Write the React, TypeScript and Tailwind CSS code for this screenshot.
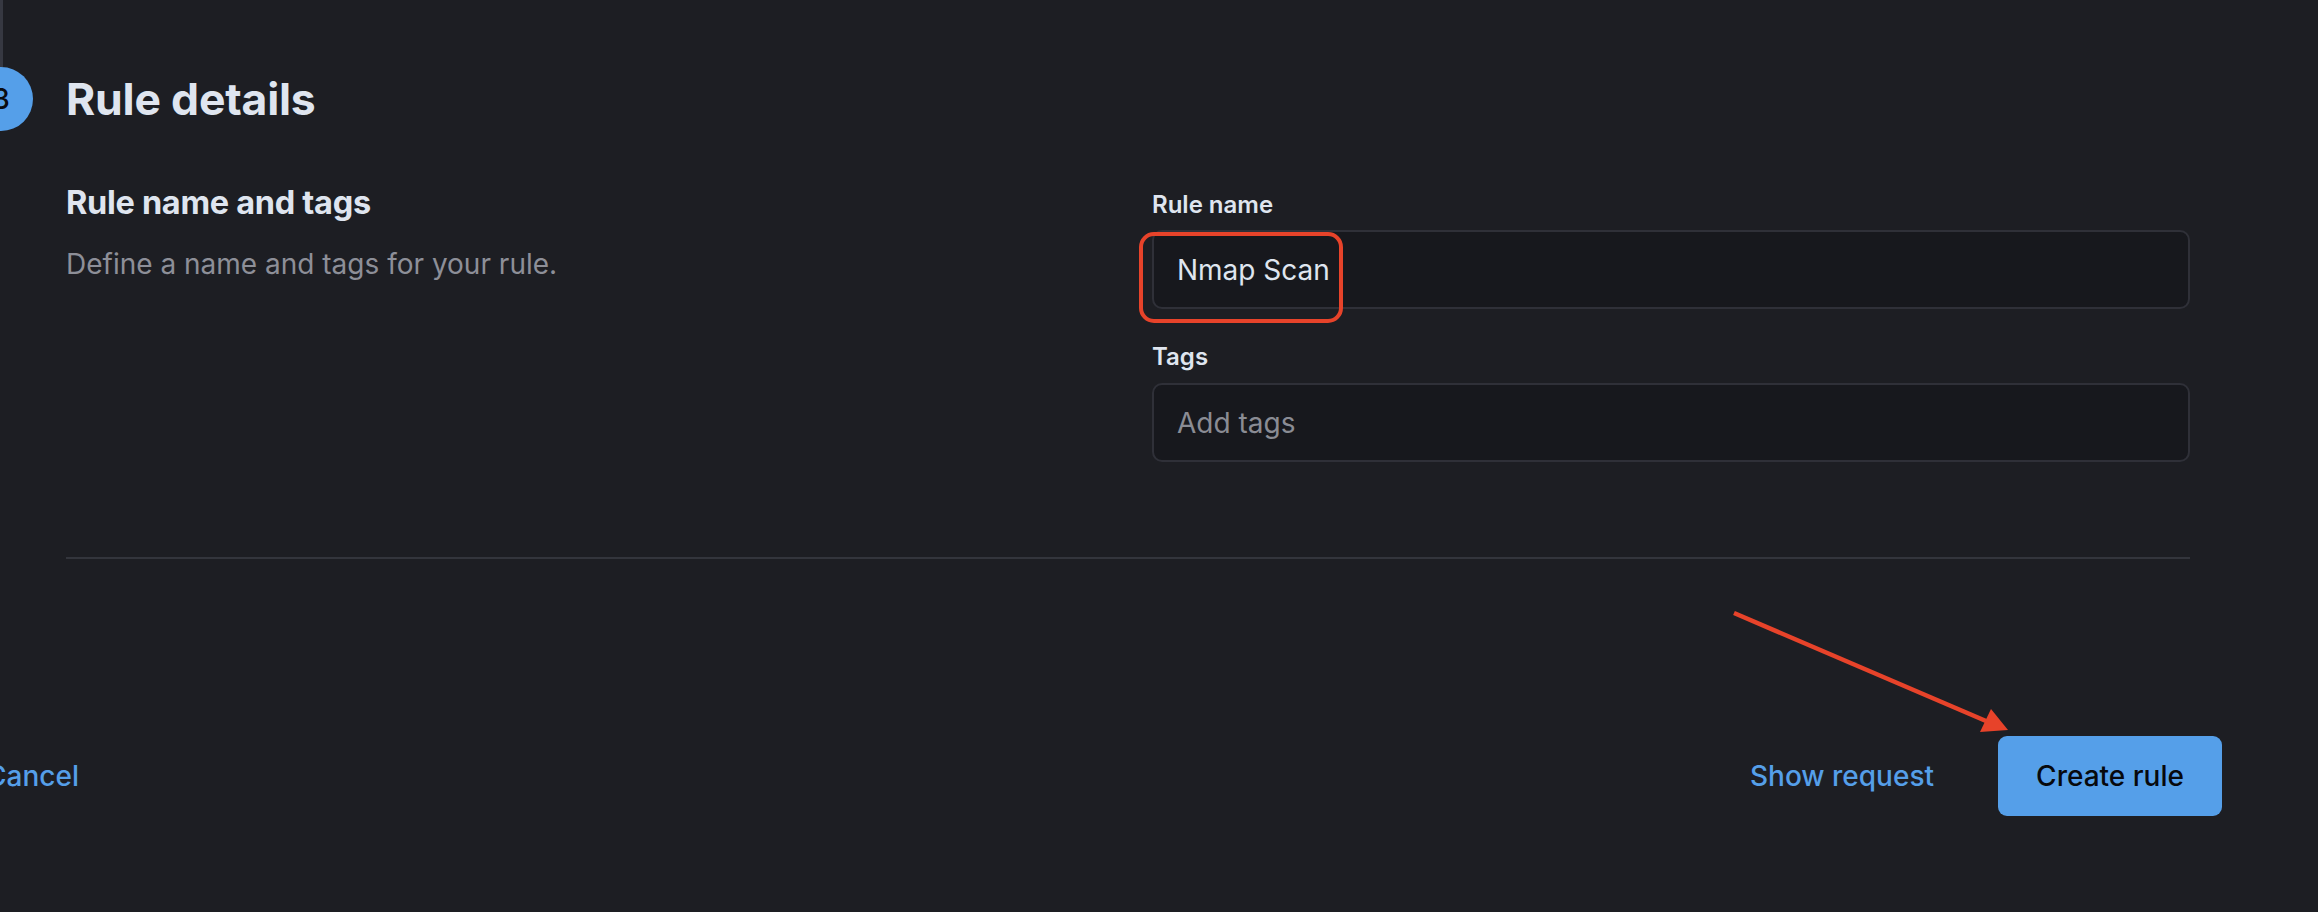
import React from "react";

export default function App() {
  return (
    <div
      className="relative w-[2318px] h-[912px] overflow-hidden bg-[#1d1e23] text-[#dfe5ef]"
      style={{ fontFamily: "Inter, 'Noto Sans', sans-serif" }}
    >
      {/* step */}
      <div className="flex">
        <div className="-ml-[31px] w-[64px] shrink-0 flex flex-col items-center">
          <div className="w-[3px] h-[67px] bg-[#363841]" />
          <div className="w-[64px] h-[64px] rounded-full bg-[#559fe9] flex items-center justify-center text-[28px] font-medium text-[#0b0c10] leading-none">
            3
          </div>
        </div>
        <div className="ml-[33px] flex-1 mr-[128px] pt-[67px]">
          <div className="h-[64px] flex items-center">
            <h2 className="text-[44.5px] font-bold leading-none tracking-[-0.2px] text-[#dfe5ef]">
              Rule details
            </h2>
          </div>

          <div className="mt-[56px] flex">
            <div className="flex-1">
              <h3 className="text-[32.5px] font-bold leading-none tracking-[-0.3px] text-[#dfe5ef]">
                Rule name and tags
              </h3>
              <p className="mt-[30px] text-[28px] leading-none text-[#8d8f98]">
                Define a name and tags for your rule.
              </p>
            </div>
            <div className="w-[1038px] shrink-0 pt-[6px]">
              <div className="text-[24px] font-semibold leading-none text-[#dfe5ef]">
                Rule name
              </div>
              <div className="mt-[13px] h-[79px] rounded-[10px] border-2 border-[#2f3038] bg-[#17181d] flex items-center pl-[23px] text-[28px] text-[#dfe5ef]">
                Nmap Scan
              </div>
              <div className="mt-[36px] text-[24px] font-semibold leading-none text-[#dfe5ef]">
                Tags
              </div>
              <div className="mt-[14px] h-[79px] rounded-[10px] border-2 border-[#2f3038] bg-[#17181d] flex items-center pl-[23px] text-[28px] text-[#8a8c94]">
                Add tags
              </div>
            </div>
          </div>

          <div className="mt-[95px] h-[2px] bg-[#33353c]" />
        </div>
      </div>

      {/* footer */}
      <div className="mt-[177px] -ml-[14px] mr-[96px] flex items-center justify-between">
        <button className="text-[28px] font-medium text-[#559fe9] leading-none">Cancel</button>
        <div className="flex items-center gap-[64px]">
          <button className="text-[28px] font-medium text-[#559fe9] leading-none">Show request</button>
          <button className="w-[224px] h-[80px] rounded-[9px] bg-[#559fe9] text-[28px] font-medium text-[#07090d] leading-none">
            Create rule
          </button>
        </div>
      </div>

      {/* annotations */}
      <div className="absolute left-[1139px] top-[232px] w-[204px] h-[91px] rounded-[15px] border-[4px] border-[#e7432a]" />
      <svg
        className="absolute left-0 top-0 pointer-events-none"
        width="2318"
        height="912"
        viewBox="0 0 2318 912"
      >
        <line x1="1734" y1="613" x2="1986" y2="721" stroke="#e7432a" strokeWidth="4.5" />
        <polygon points="1980,732 1991,709 2008,730" fill="#e7432a" />
      </svg>
    </div>
  );
}
